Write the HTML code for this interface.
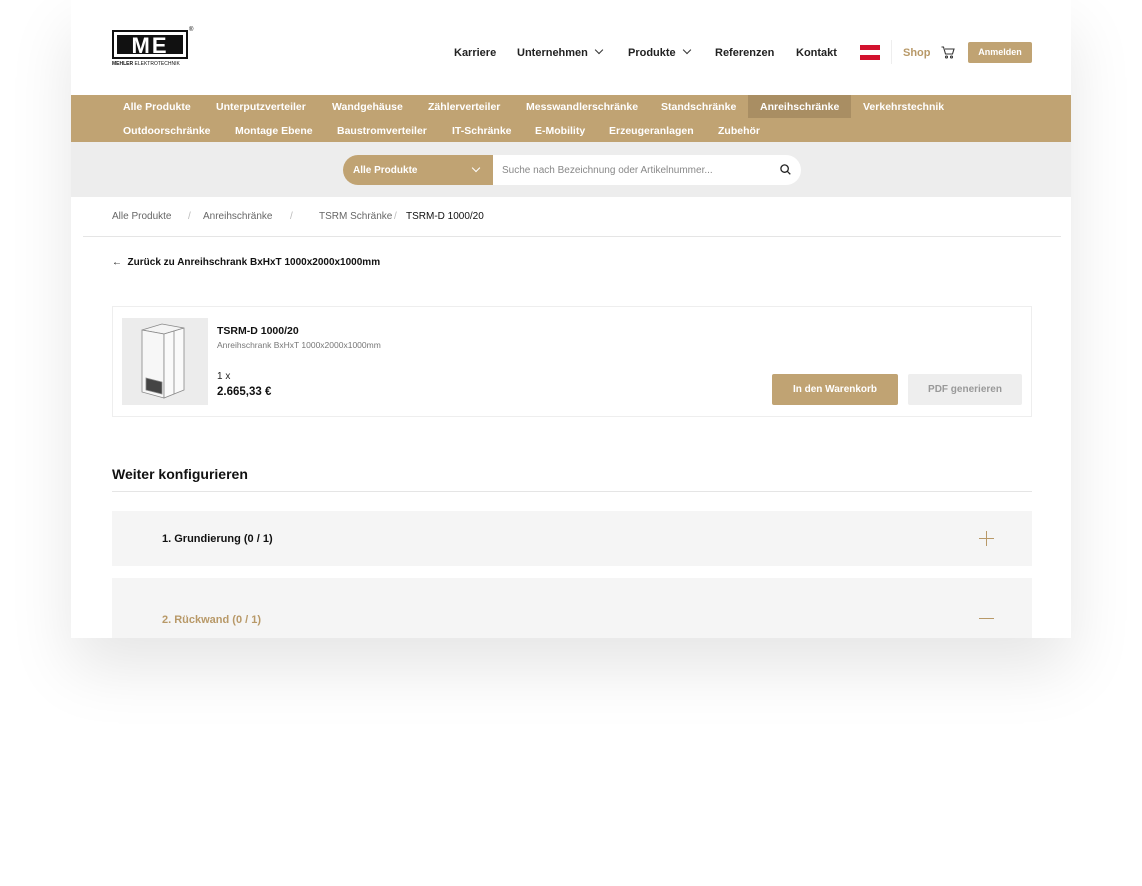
<!DOCTYPE html>
<html><head><meta charset="utf-8"><style>
*{margin:0;padding:0;box-sizing:border-box}
body{width:1142px;height:886px;background:#fff;font-family:"Liberation Sans",sans-serif;position:relative;overflow:hidden}
.card{position:absolute;left:71px;top:0;width:1000px;height:638px;background:#fff;box-shadow:0 30px 60px rgba(0,0,0,.10);overflow:hidden}
.a{position:absolute;white-space:nowrap}
.nav{font-size:11px;font-weight:bold;color:#222;top:47px}
.gold{background:#c0a373}
.cat{font-size:10.5px;font-weight:bold;color:#fff}
.chev{display:inline-block;width:6px;height:6px;border-right:1.2px solid #333;border-bottom:1.2px solid #333;transform:rotate(45deg);margin-left:8px;position:relative;top:-3px}
.bc{font-size:10px;color:#666;top:211px}
</style></head><body>
<div class="card">
 <div class="a" style="left:41px;top:30px;width:76px;height:29px;border:2px solid #111;background:#fff"><div style="position:absolute;left:3px;top:3px;right:3px;bottom:3px;background:#111;color:#fff;font:900 22px/21px 'Liberation Sans';text-align:center;letter-spacing:2px;overflow:hidden">ME</div></div>
 <div class="a" style="left:118px;top:27px;font-size:6px">®</div>
 <div class="a" style="left:41px;top:61px;font-size:5px;color:#111"><b>MEHLER</b> ELEKTROTECHNIK</div>
 <div class="a nav" style="left:383px">Karriere</div>
 <div class="a nav" style="left:446px">Unternehmen<span class="chev"></span></div>
 <div class="a nav" style="left:557px">Produkte<span class="chev"></span></div>
 <div class="a nav" style="left:644px">Referenzen</div>
 <div class="a nav" style="left:725px">Kontakt</div>
 <div class="a" style="left:789px;top:45px;width:20px;height:15px;background:linear-gradient(#d2122e 33%,#fff 33%,#fff 66%,#d2122e 66%)"></div>
 <div class="a" style="left:820px;top:40px;width:1px;height:24px;background:#eee"></div>
 <div class="a nav" style="left:832px;color:#b89968">Shop</div>
 <svg class="a" style="left:870px;top:46px" width="14" height="13" viewBox="0 0 14 13" fill="none" stroke="#333" stroke-width="1.1"><path d="M0.5 1h2l2 7h7l1.5-5H4"/><circle cx="5.5" cy="11" r="1"/><circle cx="10.5" cy="11" r="1"/></svg>
 <div class="a gold" style="left:897px;top:42px;width:64px;height:21px;border-radius:2px;color:#fff;font-size:9px;font-weight:bold;text-align:center;line-height:21px">Anmelden</div>
 <div class="a gold" style="left:0;top:95px;width:1000px;height:47px"></div>
 <div class="a" style="left:677px;top:95px;width:103px;height:23px;background:#a98e63"></div>
 <div class="a cat" style="left:52px;top:101px">Alle Produkte</div>
 <div class="a cat" style="left:145px;top:101px">Unterputzverteiler</div>
 <div class="a cat" style="left:261px;top:101px">Wandgehäuse</div>
 <div class="a cat" style="left:357px;top:101px">Zählerverteiler</div>
 <div class="a cat" style="left:455px;top:101px">Messwandlerschränke</div>
 <div class="a cat" style="left:590px;top:101px">Standschränke</div>
 <div class="a cat" style="left:689px;top:101px">Anreihschränke</div>
 <div class="a cat" style="left:792px;top:101px">Verkehrstechnik</div>
 <div class="a cat" style="left:52px;top:125px">Outdoorschränke</div>
 <div class="a cat" style="left:164px;top:125px">Montage Ebene</div>
 <div class="a cat" style="left:266px;top:125px">Baustromverteiler</div>
 <div class="a cat" style="left:381px;top:125px">IT-Schränke</div>
 <div class="a cat" style="left:464px;top:125px">E-Mobility</div>
 <div class="a cat" style="left:538px;top:125px">Erzeugeranlagen</div>
 <div class="a cat" style="left:647px;top:125px">Zubehör</div>
 <div class="a" style="left:0;top:142px;width:1000px;height:55px;background:#ededed"></div>
 <div class="a" style="left:272px;top:155px;width:458px;height:30px;background:#fff;border-radius:15px"></div>
 <div class="a gold" style="left:272px;top:155px;width:150px;height:30px;border-radius:15px 0 0 15px;color:#fff;font-size:10px;font-weight:bold;line-height:31px;padding-left:10px">Alle Produkte<span style="position:absolute;left:130px;top:10px;width:6px;height:6px;border-right:1.2px solid #fff;border-bottom:1.2px solid #fff;transform:rotate(45deg)"></span></div>
 <div class="a" style="left:431px;top:165px;font-size:10px;color:#888">Suche nach Bezeichnung oder Artikelnummer...</div>
 <svg class="a" style="left:709px;top:164px" width="11" height="11" viewBox="0 0 11 11" fill="none" stroke="#222" stroke-width="1.3"><circle cx="4.6" cy="4.6" r="3.7"/><path d="M7.3 7.3l3 3"/></svg>
 <div class="a bc" style="left:41px">Alle Produkte</div>
 <div class="a bc" style="left:117px;color:#bbb">/</div>
 <div class="a bc" style="left:132px">Anreihschränke</div>
 <div class="a bc" style="left:219px;color:#bbb">/</div>
 <div class="a bc" style="left:248px">TSRM Schränke</div>
 <div class="a bc" style="left:323px;color:#bbb">/</div>
 <div class="a bc" style="left:335px;color:#111">TSRM-D 1000/20</div>
 <div class="a" style="left:12px;top:236px;width:978px;height:1px;background:#e5e5e5"></div>
 <div class="a" style="left:41px;top:257px;font-size:10px;font-weight:bold;color:#111">← &nbsp;Zurück zu Anreihschrank BxHxT 1000x2000x1000mm</div>
 <div class="a" style="left:41px;top:306px;width:920px;height:111px;border:1px solid #eee"></div>
 <div class="a" style="left:51px;top:318px;width:86px;height:87px;background:#ececec">
  <svg width="86" height="87" viewBox="0 0 86 87" fill="none" stroke="#888" stroke-width="0.8"><path d="M20 12l20-6 22 4-20 6z" fill="#f4f4f4"/><path d="M20 12v62l22 6V16z" fill="#f7f7f7"/><path d="M42 16l20-6v62l-20 8z" fill="#fafafa"/><path d="M24 60l16 4v12l-16-4z" fill="#444"/><path d="M52 13v63"/></svg></div>
 <div class="a" style="left:146px;top:325px;font-size:10.5px;font-weight:bold;color:#111">TSRM-D 1000/20</div>
 <div class="a" style="left:146px;top:340px;font-size:8.5px;color:#777">Anreihschrank BxHxT 1000x2000x1000mm</div>
 <div class="a" style="left:146px;top:371px;font-size:10px;color:#222">1 x</div>
 <div class="a" style="left:146px;top:386px;font-size:11.5px;font-weight:bold;color:#111">2.665,33 €</div>
 <div class="a gold" style="left:701px;top:374px;width:126px;height:31px;border-radius:2px;color:#fff;font-size:10px;font-weight:bold;text-align:center;line-height:31px">In den Warenkorb</div>
 <div class="a" style="left:837px;top:374px;width:114px;height:31px;border-radius:2px;background:#eee;color:#999;font-size:10px;font-weight:bold;text-align:center;line-height:31px">PDF generieren</div>
 <div class="a" style="left:41px;top:466px;font-size:14px;font-weight:bold;color:#111">Weiter konfigurieren</div>
 <div class="a" style="left:41px;top:491px;width:920px;height:1px;background:#e5e5e5"></div>
 <div class="a" style="left:41px;top:511px;width:920px;height:55px;background:#f5f5f5"></div>
 <div class="a" style="left:91px;top:533px;font-size:11px;font-weight:bold;color:#111">1. Grundierung (0 / 1)</div>
 <div class="a" style="left:908px;top:531px;width:15px;height:15px"><div style="position:absolute;left:7px;top:0;width:1.2px;height:15px;background:#b89968"></div><div style="position:absolute;left:0;top:7px;width:15px;height:1.2px;background:#b89968"></div></div>
 <div class="a" style="left:41px;top:578px;width:920px;height:70px;background:#f5f5f5"></div>
 <div class="a" style="left:91px;top:614px;font-size:11px;font-weight:bold;color:#b89968">2. Rückwand (0 / 1)</div>
 <div class="a" style="left:908px;top:618px;width:15px;height:1.2px;background:#b89968"></div>
</div>
</body></html>
